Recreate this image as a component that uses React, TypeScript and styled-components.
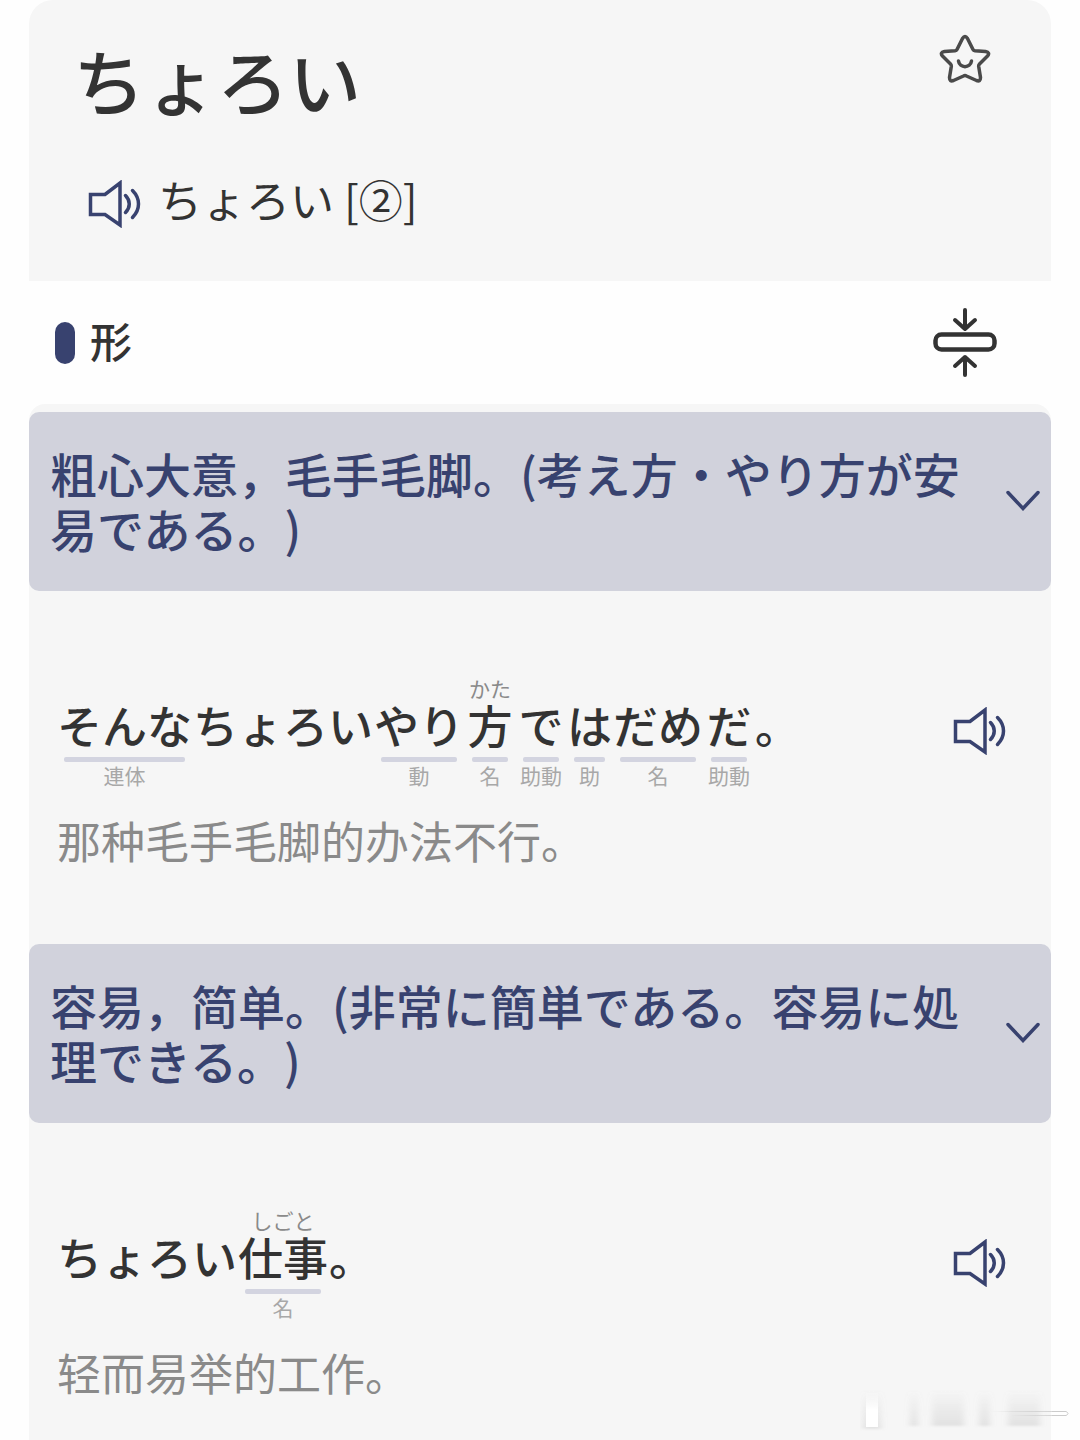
import React, { useState } from 'react';
import styled, { createGlobalStyle } from 'styled-components';

const JP = '"Noto Sans CJK JP", "Noto Sans", sans-serif';
const SC = '"Noto Sans CJK SC", "Noto Sans", sans-serif';
const NAVY = '#38426f';
const INK = '#333333';

const GlobalStyle = createGlobalStyle`
  * { box-sizing: border-box; }
  body { margin: 0; background: #fefefe; text-spacing-trim: space-all; }
  button { border: 0; padding: 0; margin: 0; background: none; cursor: pointer; }
  h1, h2, h3, p { margin: 0; }
  svg { display: block; flex: none; }
`;

const Page = styled.main`
  position: relative;
  display: flex;
  flex-direction: column;
  min-height: 100vh;
  padding: 0 29px;
  font-family: ${JP};
  color: ${INK};
`;

const WordCard = styled.header`
  display: flex;
  justify-content: space-between;
  align-items: flex-start;
  padding: 34px 60px 46px 44px;
  border-radius: 24px 24px 0 0;
  background: #f6f6f6;
`;

const Headword = styled.h1`
  font-size: 72px;
  line-height: 90px;
  font-weight: 500;
`;

const Pronunciation = styled.div`
  display: flex;
  align-items: center;
  gap: 16px;
  margin-top: 48px;
  padding-left: 15px;
  font-size: 44px;
  line-height: 55px;
`;

const Kana = styled.span`
  display: flex;
  gap: 10px;
  padding-bottom: 8px;
`;

const IconButton = styled.button`
  flex: none;
  color: ${(p: { $color: string }) => p.$color};
`;

const SectionBar = styled.section`
  display: flex;
  align-items: center;
  justify-content: space-between;
  padding: 27px 54px 27px 26px;
`;

const PartOfSpeech = styled.h2`
  display: flex;
  align-items: center;
  gap: 15px;
  font-size: 42px;
  line-height: 56px;
  font-weight: 500;
  span { padding-bottom: 6px; }
  &::before {
    content: '';
    width: 20px;
    height: 42px;
    border-radius: 10px;
    background: ${NAVY};
  }
`;

const Senses = styled.section`
  flex: 1;
  padding-top: 8px;
  border-radius: 16px 16px 0 0;
  background: #f6f6f6;
`;

const SenseHead = styled.button`
  display: flex;
  align-items: center;
  justify-content: space-between;
  gap: 24px;
  width: 100%;
  padding: 33px 11px 36px 21px;
  border-radius: 10px;
  background: #d1d2dc;
  color: ${NAVY};
  font-family: ${JP};
  font-size: 47px;
  line-height: 55px;
  font-weight: 500;
  text-align: left;
  text-spacing-trim: space-all;
`;

const Example = styled.article`
  display: flex;
  justify-content: space-between;
  align-items: flex-start;
  padding: 85px 44px 72px 28px;
  &:last-child { padding-bottom: 24px; }
`;

const ExampleIcon = styled.div`
  padding-top: 31px;
`;

const Sentence = styled.div`
  display: flex;
  flex-wrap: wrap;
  gap: 1px;
`;

const Word = styled.span`
  display: flex;
  flex-direction: column;
  align-items: center;
  font-size: 45px;
  line-height: 50px;
  font-weight: 500;
`;

const Note = styled.small`
  height: 24px;
  padding: 0 4px;
  font-size: 21px;
  line-height: 24px;
  font-weight: 400;
  color: ${(p: { $color: string }) => p.$color};
`;

const Underline = styled.i`
  align-self: stretch;
  height: 5px;
  margin: 7px 7px 1px;
  border-radius: 2px;
  background: ${(p: { $on: boolean }) => (p.$on ? '#d3d4e0' : 'transparent')};
`;

const Translation = styled.p`
  margin-top: 21px;
  font-family: ${SC};
  font-size: 44px;
  line-height: 64px;
  font-weight: 400;
  color: #8a8a8a;
`;

const Smudge = styled.svg`
  position: absolute;
  right: 4px;
  bottom: 6px;
  pointer-events: none;
`;

const Speaker = () => (
  <svg width="54" height="48" viewBox="0 0 54 48" fill="none" stroke="currentColor" strokeWidth="3.500">
    <path d="M2.500 14.500h14.500L32 3v42L17 34.500H2.500z" />
    <path d="M37.500 15.500c5 5 5 12 0 17M44.500 10.500c8 8 8 19 0 27" strokeLinecap="round" />
  </svg>
);

const Star = () => (
  <svg width="52" height="52" viewBox="0 0 52 52" fill="none" stroke="currentColor" strokeWidth="3.500" strokeLinejoin="round" strokeLinecap="round">
    <path d="M23.500 4.500Q26 .5 28.500 4.500L34 15.500Q34.500 16.500 36 16.700L46.500 17.500Q51.500 18.500 48.500 22L40.500 30Q39.500 31 39.700 32.500L41.500 43.500Q41.500 48 37.500 46.500L27.500 42Q26 41.200 24.500 42L14.500 46.500Q10.500 48 10.500 43.500L12.300 32.500Q12.500 31 11.500 30L3.500 22Q.5 18.500 5.500 17.500L16 16.700Q17.500 16.500 18 15.500z" />
    <path d="M19.500 27c1 7.500 12 7.500 13 0" />
  </svg>
);

const CollapseAll = () => (
  <svg width="64" height="69" viewBox="0 0 64 69" fill="none" stroke="currentColor" strokeWidth="4" strokeLinecap="round" strokeLinejoin="round">
    <rect x="2.500" y="26.500" width="59" height="15" rx="6" strokeWidth="4.500" />
    <path d="M32 2v18M22 12l10 9 10-9M32 67V49M22 58l10-9 10 9" />
  </svg>
);

const Chevron = () => (
  <svg width="34" height="22" viewBox="0 0 34 22" fill="none" stroke="currentColor" strokeWidth="3.500" strokeLinecap="round">
    <path d="M2 3.500 17 19.500 32 3.500" />
  </svg>
);

type Token = { text: string; reading?: string; tag?: string };
type Sense = { meaning: string; tokens: Token[]; translation: string };

const senses: Sense[] = [
  {
    meaning: '粗心大意，毛手毛脚。(考え方・やり方が安易である。)',
    tokens: [
      { text: 'そんな', tag: '連体' },
      { text: 'ちょろい' },
      { text: 'やり', tag: '動' },
      { text: '方', reading: 'かた', tag: '名' },
      { text: 'で', tag: '助動' },
      { text: 'は', tag: '助' },
      { text: 'だめ', tag: '名' },
      { text: 'だ', tag: '助動' },
      { text: '。' },
    ],
    translation: '那种毛手毛脚的办法不行。',
  },
  {
    meaning: '容易，简单。(非常に簡単である。容易に処理できる。)',
    tokens: [
      { text: 'ちょろい' },
      { text: '仕事', reading: 'しごと', tag: '名' },
      { text: '。' },
    ],
    translation: '轻而易举的工作。',
  },
];

function SenseBlock({ sense, open, onToggle }: { sense: Sense; open: boolean; onToggle: () => void }) {
  return (
    <>
      <SenseHead lang="ja" aria-expanded={open} onClick={onToggle}>
        <span>{sense.meaning}</span>
        <Chevron />
      </SenseHead>
      {open && (
        <Example>
          <div>
            <Sentence lang="ja">
              {sense.tokens.map((t, i) => (
                <Word key={i}>
                  <Note $color="#8a8a8a">{t.reading}</Note>
                  {t.text}
                  <Underline $on={!!t.tag} />
                  <Note $color="#a8a8a8">{t.tag}</Note>
                </Word>
              ))}
            </Sentence>
            <Translation lang="zh-CN">{sense.translation}</Translation>
          </div>
          <ExampleIcon>
            <IconButton $color={NAVY} aria-label="朗读例句"><Speaker /></IconButton>
          </ExampleIcon>
        </Example>
      )}
    </>
  );
}

export default function App() {
  const [open, setOpen] = useState(senses.map(() => true));
  const toggle = (n: number) => setOpen(open.map((v, i) => (i === n ? !v : v)));
  const toggleAll = () => setOpen(open.map(() => !open.some(Boolean)));

  return (
    <Page lang="ja">
      <GlobalStyle />
      <WordCard>
        <div>
          <Headword>ちょろい</Headword>
          <Pronunciation>
            <IconButton $color={NAVY} aria-label="朗读单词"><Speaker /></IconButton>
            <Kana><span>ちょろい</span><span>[②]</span></Kana>
          </Pronunciation>
        </div>
        <IconButton $color="#4a4a4a" aria-label="收藏"><Star /></IconButton>
      </WordCard>
      <SectionBar>
        <PartOfSpeech><span>形</span></PartOfSpeech>
        <IconButton $color={INK} aria-label="全部折叠" onClick={toggleAll}><CollapseAll /></IconButton>
      </SectionBar>
      <Senses>
        {senses.map((s, i) => (
          <SenseBlock key={s.meaning} sense={s} open={open[i]} onToggle={() => toggle(i)} />
        ))}
      </Senses>
      <Smudge width="216" height="48" viewBox="0 0 216 48" aria-hidden="true">
        <defs>
          <linearGradient id="fade" x1="0" y1="0" x2="0" y2="1">
            <stop offset="0" stopColor="#999" stopOpacity="0" />
            <stop offset="1" stopColor="#999" stopOpacity=".22" />
          </linearGradient>
          <linearGradient id="glow" x1="0" y1="0" x2="0" y2="1">
            <stop offset="0" stopColor="#fff" stopOpacity="0" />
            <stop offset=".5" stopColor="#fff" />
          </linearGradient>
          <linearGradient id="streak" x1="0" y1="0" x2="1" y2="0">
            <stop offset="0" stopColor="#aaa" stopOpacity="0" />
            <stop offset="1" stopColor="#aaa" stopOpacity=".5" />
          </linearGradient>
          <filter id="soft" x="-30%" y="-10%" width="160%" height="120%"><feGaussianBlur stdDeviation="3 1" /></filter>
        </defs>
        <g fill="url(#fade)" filter="url(#soft)">
          <rect x="3" y="4" width="18" height="39" />
          <rect x="50" y="4" width="8" height="36" />
          <rect x="72" y="4" width="32" height="36" />
          <rect x="119" y="4" width="11" height="36" />
          <rect x="148" y="4" width="32" height="36" />
        </g>
        <rect x="6" y="6" width="12" height="35" fill="url(#glow)" />
        <rect x="130" y="25" width="66" height="1" fill="url(#streak)" />
        <rect x="150" y="29" width="46" height="1" fill="url(#streak)" />
        <path d="M192 25.500h14q4 2 0 4h-14" stroke="#ccc" fill="#fff" />
      </Smudge>
    </Page>
  );
}
